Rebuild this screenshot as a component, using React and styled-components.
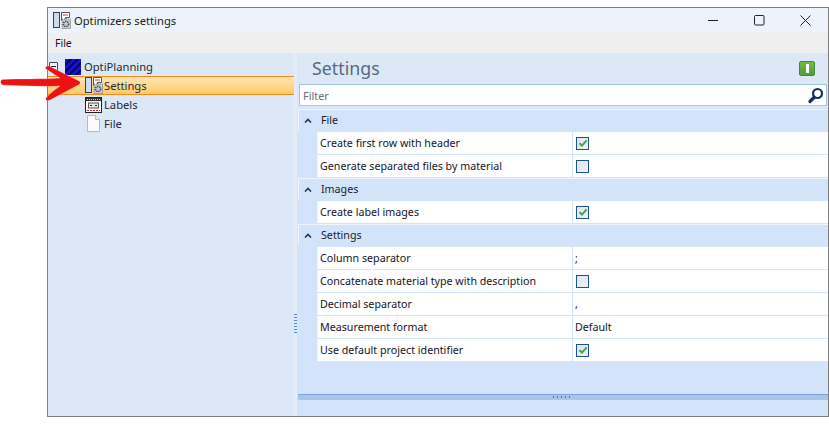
import React from "react";
import styled, { createGlobalStyle } from "styled-components";

const Global = createGlobalStyle`
  html, body { margin: 0; padding: 0; background: #fff; }
  body { font-family: "Noto Sans", "Open Sans", sans-serif; font-size: 11px; color: #1a1a2a; }
`;
const Page = styled.div`
  position: relative; width: 829px; height: 429px; overflow: hidden; padding: 7px 0 0 47px; box-sizing: border-box;
`;
const Win = styled.div`
  width: 782px; height: 410px; box-sizing: border-box; border: 1px solid #808080;
  display: flex; flex-direction: column; background: #d3e4fa;
`;
const TitleBar = styled.div`
  height: 25px; flex: none; background: #eef3fb; display: flex; align-items: center; padding-left: 5px;
`;
const TitleText = styled.span`
  font-family: "Noto Sans", sans-serif; font-size: 11.2px; color: #1a1a1a; margin-left: 4px; flex: 1;
`;
const WinBtn = styled.div`
  width: 46px; height: 25px; display: flex; align-items: center; justify-content: center;
`;
const MenuBar = styled.div`
  height: 20px; flex: none; background: #efefef; display: flex; align-items: center; padding-left: 7px; font-size: 10.5px; color: #1a1030;
`;
const Body = styled.div`
  flex: 1; display: flex; min-height: 0;
`;
const Sidebar = styled.div`
  width: 246px; flex: none; background: #dce8f6; padding-top: 4px; box-sizing: border-box;
`;
const Splitter = styled.div`
  width: 3px; flex: none; background: #e3ecf8; position: relative;
`;
const Grip = styled.div`
  position: absolute; left: 0; top: 261px; width: 3px; height: 19px;
  background: repeating-linear-gradient(to bottom, #4a86d8 0 1px, transparent 1px 3px);
`;
const TreeRow = styled.div`
  height: 19px; box-sizing: border-box; display: flex; align-items: center;
  padding-left: ${p => p.$indent}px; font-size: 11.2px; color: #1a2a3a; gap: 2px;
  ${p => p.$active && `
    border-top: 1px solid #f08a1c; border-bottom: 1px solid #f08a1c;
    background: linear-gradient(to bottom, #ffe6b4, #ffc968);
  `}
`;
const Expander = styled.div`
  width: 9px; height: 9px; box-sizing: border-box; border: 1px solid #445; border-radius: 1px; background: #eef3fb;
  display: flex; align-items: center; justify-content: center; margin-right: 5px;
  &::after { content: ""; width: 5px; height: 1px; background: #223; }
`;
const Main = styled.div`
  flex: 1; min-width: 0; display: flex; flex-direction: column;
`;
const Head = styled.div`
  height: 29px; flex: none; background: #dce8f6; display: flex; align-items: center; justify-content: space-between;
  padding: 1px 13px 0 15px; box-sizing: border-box;
`;
const HeadTitle = styled.h1`
  margin: 0; font-weight: 400; font-size: 17.8px; color: #566a82; font-family: "Noto Sans", sans-serif;
`;
const Badge = styled.div`
  width: 16px; height: 15px; box-sizing: border-box; border: 1px solid #3b8a3b; border-radius: 2px;
  background: linear-gradient(to bottom, #74bb48, #4c9f38); display: flex; align-items: center; justify-content: center;
  &::after { content: ""; width: 3px; height: 9px; background: #fff; }
`;
const FilterBar = styled.div`
  background: #dce8f6; padding: 2px 1px 2px 2px; flex: none;
`;
const FilterBox = styled.div`
  height: 22px; box-sizing: border-box; border: 1px solid #a3c3ea; background: #fff; display: flex; align-items: center;
  justify-content: space-between; padding: 1px 2px 0 3px; font-size: 10.9px; color: #6d6d78;
`;
const Grid = styled.div`
  flex: 1; background: #d3e4fa; padding: 1px 0 0 1px; min-height: 0;
`;
const GroupHeader = styled.div`
  height: 21px; background: #d3e4fa; display: flex; align-items: center; margin-bottom: 2px; font-size: 10.7px; color: #1a1a2a;
  border-top: 1px solid #f2f6fc; border-left: 1px solid #f2f6fc; box-sizing: border-box;
`;
const Chevron = styled.svg`
  width: 8px; height: 5px; margin: 0 9px 0 5px; flex: none;
`;
const Row = styled.div`
  height: 23px; box-sizing: border-box; display: grid; grid-template-columns: 255px 1fr; margin-left: 19px;
  background: #fff; border-bottom: 1px solid #d3e4fa; border-left: 1px solid #f2f6fc;
`;
const Label = styled.div`
  display: flex; align-items: center; padding-left: 2px; font-size: 10.7px; color: #15151f; border-right: 1px solid #d3e4fa; white-space: nowrap;
`;
const Value = styled.div`
  display: flex; align-items: center; padding-left: 2px; font-size: 10.7px; color: #15151f;
`;
const Check = styled.div`
  width: 13px; height: 13px; box-sizing: border-box; border: 1.5px solid #1f5585; margin-left: 1px;
  background: linear-gradient(to bottom right, #dde3ee, #eef1f7); display: flex; align-items: center; justify-content: center;
`;
const Footer = styled.div`
  height: 5px; margin-top: 32px; border-top: 1px solid #7ba2dc; background: #a9c4e9; position: relative;
  &::after {
    content: ""; position: absolute; left: 255px; top: 1px; width: 20px; height: 2px;
    background: repeating-linear-gradient(to right, #4a78c0 0 1px, transparent 1px 4px);
  }
`;
const ArrowOverlay = styled.svg`
  position: absolute; left: 0; top: 60px; width: 90px; height: 45px; pointer-events: none;
`;

const SettingsIcon = () => (
  <svg width="18" height="17" viewBox="0 0 18 17" style={{ flex: "none", marginRight: -1 }}>
    <rect x="0.5" y="0.5" width="6" height="15" fill="#c9dcf0" stroke="#2f4256" />
    <path d="M8.5 0.5h8v5h-4v3h-4z" fill="#fff" stroke="#4a5866" />
    <rect x="10" y="2" width="5" height="2" fill="#e8a090" />
    <rect x="9" y="7" width="8.5" height="9.5" fill="#c6ccd0" stroke="#6a7278" strokeDasharray="1 1" />
    <circle cx="13" cy="12" r="2.6" fill="none" stroke="#4a5258" strokeWidth="1.6" strokeDasharray="1.4 0.8" />
  </svg>
);
const LabelsIcon = () => (
  <svg width="17" height="16" viewBox="0 0 17 16" style={{ flex: "none" }}>
    <rect x="0.5" y="0.5" width="16" height="15" fill="#fff" stroke="#222" />
    <rect x="1" y="1" width="15" height="3" fill="#333" />
    <path d="M2 2.5h13" stroke="#ddd" strokeDasharray="1 1" />
    <rect x="3.5" y="6" width="10" height="5" fill="#e8e8e8" stroke="#555" />
    <path d="M5 8.5h2M10 8.5h2" stroke="#222" />
    <path d="M2 13.5h13" stroke="#d02020" strokeDasharray="2 1" />
  </svg>
);
const FileIcon = () => (
  <svg width="15" height="17" viewBox="0 0 15 17" style={{ flex: "none", marginLeft: 1, marginRight: 1 }}>
    <path d="M1.5 0.5h8l4 4v12h-12z" fill="#fbfbfb" stroke="#b9b9b9" />
    <path d="M9.5 0.5v4h4" fill="#eee" stroke="#b9b9b9" />
  </svg>
);
const PlanIcon = () => (
  <svg width="16" height="16" viewBox="0 0 16 16" style={{ flex: "none", marginRight: 1 }}>
    <rect width="16" height="16" fill="#1212e0" />
    <path d="M-1 7L7-1M-1 14L14-1M3 17L17 3M10 17L17 10" stroke="#080830" strokeWidth="1.8" />
  </svg>
);
const Tick = () => (
  <svg width="10" height="10" viewBox="0 0 10 10"><path d="M1.5 5.2L4 7.6L8.6 2.4" fill="none" stroke="#46a546" strokeWidth="2" /></svg>
);
const Up = () => (
  <Chevron viewBox="0 0 8 5"><path d="M1 4.5L4 1.5L7 4.5" fill="none" stroke="#1c3560" strokeWidth="1.6" /></Chevron>
);

const groups = [
  ["File", [["Create first row with header", true], ["Generate separated files by material", false]]],
  ["Images", [["Create label images", true]]],
  ["Settings", [
    ["Column separator", ";"],
    ["Concatenate material type with description", false],
    ["Decimal separator", ","],
    ["Measurement format", "Default"],
    ["Use default project identifier", true],
  ]],
];

export default function App() {
  return (
    <Page>
      <Global />
      <Win>
        <TitleBar>
          <SettingsIcon />
          <TitleText>Optimizers settings</TitleText>
          <WinBtn><svg width="11" height="11"><path d="M0 5.5h10" stroke="#222" /></svg></WinBtn>
          <WinBtn><svg width="11" height="11"><rect x="0.5" y="0.5" width="9.5" height="9.5" rx="1" fill="none" stroke="#222" /></svg></WinBtn>
          <WinBtn><svg width="11" height="11"><path d="M0.5 0.5L10.5 10.5M10.5 0.5L0.5 10.5" stroke="#222" /></svg></WinBtn>
        </TitleBar>
        <MenuBar>File</MenuBar>
        <Body>
          <Sidebar>
            <TreeRow $indent={1}><Expander /><PlanIcon />OptiPlanning</TreeRow>
            <TreeRow $active $indent={37}><SettingsIcon />Settings</TreeRow>
            <TreeRow $indent={37}><LabelsIcon />Labels</TreeRow>
            <TreeRow $indent={37}><FileIcon />File</TreeRow>
          </Sidebar>
          <Splitter><Grip /></Splitter>
          <Main>
            <Head>
              <HeadTitle>Settings</HeadTitle>
              <Badge />
            </Head>
            <FilterBar>
              <FilterBox>
                Filter
                <svg width="17" height="17" viewBox="0 0 17 17">
                  <circle cx="10.5" cy="6.5" r="4.5" fill="#fff" stroke="#16305a" strokeWidth="2.2" />
                  <path d="M7 10.5L3 14.5" stroke="#16305a" strokeWidth="3.2" strokeLinecap="round" />
                </svg>
              </FilterBox>
            </FilterBar>
            <Grid>
              {groups.map(([name, rows]) => (
                <React.Fragment key={name}>
                  <GroupHeader><Up />{name}</GroupHeader>
                  {rows.map(([label, v]) => (
                    <Row key={label}>
                      <Label>{label}</Label>
                      <Value>
                        {typeof v === "boolean" ? <Check>{v && <Tick />}</Check> : v}
                      </Value>
                    </Row>
                  ))}
                </React.Fragment>
              ))}
              <Footer />
            </Grid>
          </Main>
        </Body>
      </Win>
      <ArrowOverlay viewBox="0 0 90 45">
        <path d="M2 19.5C20 18.5 42 19.5 60 18C55 15 49 11 45.5 8.5C45 6 48 5.5 50 6.5L80 21.5L80 24L50 40C47 41.5 45 40 46 38C50 33 56 29 60 26C42 26.5 20 26 3 25C0 24 0 20.5 2 19.5Z" fill="#ee1111" stroke="#fff" strokeOpacity="0.35" strokeWidth="0.6" strokeLinejoin="round" />
      </ArrowOverlay>
    </Page>
  );
}
